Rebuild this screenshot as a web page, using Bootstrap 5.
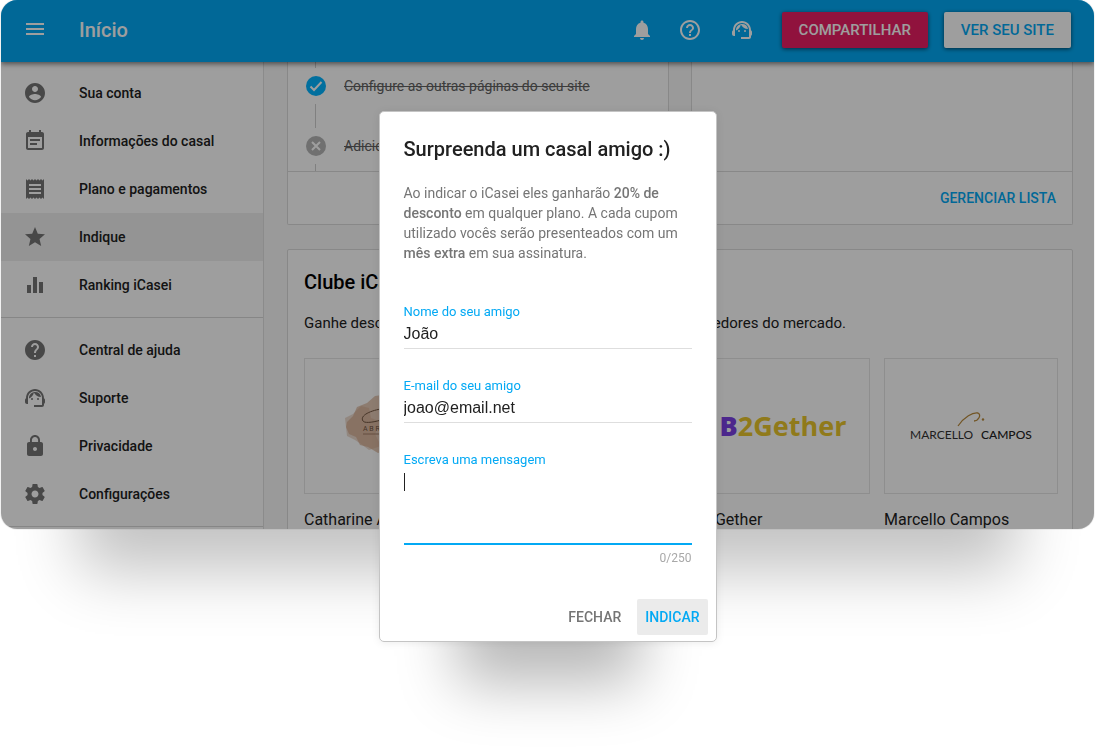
<!DOCTYPE html>
<html lang="pt-BR">
<head>
<meta charset="utf-8">
<meta name="viewport" content="width=device-width, initial-scale=1">
<title>Início - Indique</title>
<link href="https://cdn.jsdelivr.net/npm/bootstrap@5.3.0/dist/css/bootstrap.min.css" rel="stylesheet">
<style>
  body { font-family: Roboto, "Liberation Sans", sans-serif; font-size: 14px; color: #212121; background: #fff; }
  svg { display: block; fill: currentColor; }
  .app-shadow { margin: 0 1px; border-radius: 16px; box-shadow: 0 120px 60px -78px rgba(0,0,0,.24), 0 0 1px rgba(0,0,0,.5); }
  .app-window { border-radius: 16px; overflow: hidden; position: relative; background: #f8f8f8; }
  .dimmer { position: absolute; inset: 0; background: rgba(0,0,0,.38); z-index: 5; }
  .topbar { height: 62px; background: #03a9f4; color: #fff; padding: 0 23px 2px 22px; position: relative; z-index: 2; box-shadow: 0 2px 5px rgba(0,0,0,.5); }
  .page-title { font-size: 20px; font-weight: 500; line-height: 24px; margin-left: 32px; }
  .icon-btn { border: 0; background: none; color: inherit; padding: 0; }
  .top-btn { height: 36px; border: 0; border-radius: 2px; padding: 0 17px; font-size: 15px; font-weight: 500; line-height: 36px; box-shadow: 0 1px 4px rgba(0,0,0,.6); }
  .btn-share { background: #e91e63; color: #fff; }
  .btn-site { background: #fff; color: #03a9f4; }
  .side { width: 263px; background: #fff; border-right: 1px solid #e0e0e0; padding: 7px 0 2px; }
  .side a { display: flex; align-items: center; gap: 32px; height: 48px; padding: 0 22px; color: #212121; font-weight: 500; text-decoration: none; }
  .side a svg { color: #757575; }
  .side a.current { background: #efefef; }
  .side-rule { height: 1px; background: #d8d8d8; margin: 8px 0; }
  .side-rule:last-child { margin-bottom: 0; }
  .content-area { contain: size; overflow: hidden; padding: 0 21px 0 23px; }
  .panel { background: #fff; border: 1px solid #dcdcdc; border-radius: 2px; }
  .panel-top { border-top: 0; border-radius: 0 0 2px 2px; }
  .panel-row { display: grid; grid-template-columns: 1fr 1fr; gap: 22px; }
  .panel-foot { height: 53px; border-top: 1px solid #dcdcdc; padding: 0 16px; }
  .panel-foot a { color: #03a9f4; font-weight: 500; text-decoration: none; }
  .steps { height: 109px; overflow: hidden; padding: 0 16px; margin: 0; list-style: none; color: #616161; }
  .steps li { display: flex; align-items: center; gap: 16px; height: 36px; }
  .steps .step { height: 24px; text-decoration: line-through; }
  .steps .link-line::before { content: ""; width: 1px; height: 24px; background: #cfcfcf; margin-left: 11px; }
  .steps .link-line:first-child { height: 12px; }
  .steps .link-line:first-child::before { height: 12px; margin-top: -12px; }
  .club { padding: 16px 14px 0 16px; margin-top: 24px; }
  .club h2 { font-size: 20px; line-height: 32px; font-weight: 500; margin: 0; color: #000; }
  .club p { font-size: 15px; line-height: 20px; margin: 15px 0 25px; }
  .brands { display: grid; grid-template-columns: 174px 1fr 174px 174px; gap: 14px; }
  .brand-logo { height: 136px; border: 1px solid #e6e6e6; }
  .brand-name { font-size: 16px; line-height: 24px; margin: 14px 0 24px; white-space: nowrap; }
  .logo-b2 { font: 700 27px/40px "Open Sans", sans-serif; color: #e8c62c; }
  .logo-b2 b { color: #7b3fe4; }
  .modal-dialog { max-width: 338px; margin: 111px auto 0; }
  .modal-content { border: 1px solid #c4c4c4; border-radius: 5px; padding: 24px 24px 0; color: #212121; background: #fff; box-shadow: 0 120px 60px -78px rgba(0,0,0,.28), 0 1px 8px rgba(0,0,0,.08); }
  .modal h1 { font-size: 20px; line-height: 26px; font-weight: 500; margin: 0 0 21px; }
  .intro { line-height: 20px; color: #757575; margin: 0 0 39px; }
  .intro strong { font-weight: 500; }
  .field { margin-bottom: 27px; position: relative; }
  .field.message { margin-bottom: 0; }
  .field label { display: block; font-size: 13px; line-height: 20px; color: #03a9f4; }
  .field input, .field textarea { display: block; width: 100%; border: 0; border-bottom: 1px solid #dedede; border-radius: 0; padding: 0 0 3px; outline: 0; background: none; resize: none; font: 16px/24px "Liberation Sans", Arial, sans-serif; color: #212121; height: 27px; }
  .field textarea { height: 75px; border-bottom: 2px solid #03a9f4; }
  .text-caret { position: absolute; left: 0; top: 23px; width: 1px; height: 18px; background: #212121; }
  .counter { font-size: 12px; line-height: 16px; color: #a8a8a8; margin-top: 5px; text-align: right; }
  .actions { margin: 33px -16px 6px; gap: 8px; }
  .actions button { border: 0; border-radius: 2px; height: 36px; padding: 0 8px; font-weight: 500; background: none; color: #757575; }
  .actions .go { background: #ebebeb; color: #03a9f4; }
</style>
</head>
<body class="min-vh-100">
<svg class="d-none">
  <symbol id="support" viewBox="0 0 24 24"><path d="M21 12.220C21 6.730 16.740 3 12 3c-4.690 0-9 3.650-9 9.280-.600.340-1 .980-1 1.720v2c0 1.100.900 2 2 2h1v-6.100c0-3.870 3.130-7 7-7s7 3.130 7 7V19h-8v2h8c1.100 0 2-.900 2-2v-1.220c.590-.310 1-.920 1-1.640v-2.300c0-.700-.410-1.310-1-1.620z"/><circle cx="9" cy="13" r="1"/><circle cx="15" cy="13" r="1"/><path d="M18 11.030A6.040 6.040 0 0 0 12.050 6c-3.030 0-6.290 2.510-6.030 6.450a8.070 8.070 0 0 0 4.860-5.890c1.310 2.630 4 4.440 7.120 4.470z"/></symbol>
</svg>
<div class="app-shadow">
<div class="app-window">
  <header class="topbar d-flex align-items-center">
    <button class="icon-btn" aria-label="Menu"><svg width="24" height="24" viewBox="0 0 24 24"><path d="M3 17h18v-2H3v2zm0-5h18v-2H3v2zm0-7v2h18V5H3z"/></svg></button>
    <div class="page-title">Início</div>
    <div class="d-flex align-items-center ms-auto">
      <button class="icon-btn me-4" aria-label="Notificações"><svg width="24" height="24" viewBox="0 0 24 24"><path d="M12 22c1.100 0 2-.900 2-2h-4c0 1.100.900 2 2 2zm6-6v-5c0-3.070-1.630-5.640-4.500-6.320V4c0-.830-.670-1.500-1.500-1.500s-1.500.670-1.500 1.500v.680C7.640 5.360 6 7.920 6 11v5l-2 2v1h16v-1l-2-2z"/></svg></button>
      <button class="icon-btn me-4" aria-label="Ajuda"><svg width="24" height="24" viewBox="0 0 24 24"><path d="M11 18h2v-2h-2v2zm1-16C6.480 2 2 6.480 2 12s4.480 10 10 10 10-4.480 10-10S17.520 2 12 2zm0 18c-4.410 0-8-3.590-8-8s3.590-8 8-8 8 3.590 8 8-3.590 8-8 8zm0-14c-2.210 0-4 1.790-4 4h2c0-1.100.900-2 2-2s2 .900 2 2c0 2-3 1.750-3 5h2c0-2.250 3-2.500 3-5 0-2.210-1.790-4-4-4z"/></svg></button>
      <button class="icon-btn ms-1 me-4" aria-label="Suporte"><svg width="24" height="24"><use href="#support"/></svg></button>
      <button class="top-btn btn-share ms-1 me-3">COMPARTILHAR</button>
      <button class="top-btn btn-site">VER SEU SITE</button>
    </div>
  </header>
  <div class="d-flex">
    <nav class="side flex-shrink-0">
      <a href="#"><svg width="24" height="24" viewBox="0 0 24 24"><path d="M12 2C6.480 2 2 6.480 2 12s4.480 10 10 10 10-4.480 10-10S17.520 2 12 2zm0 3c1.660 0 3 1.340 3 3s-1.340 3-3 3-3-1.340-3-3 1.340-3 3-3zm0 14.200c-2.500 0-4.710-1.280-6-3.220.030-1.990 4-3.080 6-3.080 1.990 0 5.970 1.090 6 3.080-1.290 1.940-3.500 3.220-6 3.220z"/></svg>Sua conta</a>
      <a href="#"><svg width="24" height="24" viewBox="0 0 24 24"><path d="M17 10H7v2h10v-2zm2-7h-1V1h-2v2H8V1H6v2H5c-1.110 0-1.990.900-1.990 2L3 19c0 1.100.890 2 2 2h14c1.100 0 2-.900 2-2V5c0-1.100-.900-2-2-2zm0 16H5V8h14v11zm-5-5H7v2h7v-2z"/></svg>Informações do casal</a>
      <a href="#"><svg width="24" height="24" viewBox="0 0 24 24"><path d="M18 17H6v-2h12v2zm0-4H6v-2h12v2zm0-4H6V7h12v2zM3 22l1.500-1.500L6 22l1.500-1.500L9 22l1.500-1.500L12 22l1.500-1.500L15 22l1.500-1.500L18 22l1.500-1.500L21 22V2l-1.500 1.500L18 2l-1.500 1.500L15 2l-1.500 1.500L12 2l-1.500 1.500L9 2 7.500 3.500 6 2 4.500 3.500 3 2v20z"/></svg>Plano e pagamentos</a>
      <a href="#" class="current" aria-current="page"><svg width="24" height="24" viewBox="0 0 24 24"><path d="M12 17.270L18.180 21l-1.640-7.030L22 9.240l-7.190-.610L12 2 9.190 8.630 2 9.240l5.460 4.730L5.820 21z"/></svg>Indique</a>
      <a href="#"><svg width="24" height="24" viewBox="0 0 24 24"><path d="M4 12h4v8H4zM10 4h4v16h-4zM16 9h4v11h-4z"/></svg>Ranking iCasei</a>
      <div class="side-rule"></div>
      <a href="#"><svg width="24" height="24" viewBox="0 0 24 24"><path d="M12 2C6.480 2 2 6.480 2 12s4.480 10 10 10 10-4.480 10-10S17.520 2 12 2zm1 17h-2v-2h2v2zm2.070-7.750l-.900.920C13.450 12.900 13 13.500 13 15h-2v-.500c0-1.100.450-2.100 1.170-2.830l1.240-1.260c.370-.360.590-.860.590-1.410 0-1.100-.900-2-2-2s-2 .900-2 2H8c0-2.210 1.790-4 4-4s4 1.790 4 4c0 .880-.360 1.680-.930 2.250z"/></svg>Central de ajuda</a>
      <a href="#"><svg width="24" height="24"><use href="#support"/></svg>Suporte</a>
      <a href="#"><svg width="24" height="24" viewBox="0 0 24 24"><path d="M18 8h-1V6c0-2.760-2.240-5-5-5S7 3.240 7 6v2H6c-1.100 0-2 .900-2 2v10c0 1.100.900 2 2 2h12c1.100 0 2-.900 2-2V10c0-1.100-.900-2-2-2zm-6 9c-1.100 0-2-.900-2-2s.900-2 2-2 2 .900 2 2-.900 2-2 2zm3.100-9H8.900V6c0-1.710 1.390-3.100 3.100-3.100s3.100 1.390 3.100 3.100v2z"/></svg>Privacidade</a>
      <a href="#"><svg width="24" height="24" viewBox="0 0 24 24"><path d="M19.430 12.980c.040-.320.070-.640.070-.980s-.030-.660-.070-.980l2.110-1.650c.190-.150.240-.420.120-.640l-2-3.460c-.120-.220-.390-.300-.610-.220l-2.490 1c-.520-.400-1.080-.730-1.690-.980l-.380-2.650A.488.488 0 0 0 14 2h-4c-.250 0-.460.180-.490.420l-.380 2.650c-.610.250-1.170.590-1.690.980l-2.490-1c-.230-.090-.490 0-.610.220l-2 3.460c-.130.220-.070.490.120.640l2.110 1.650c-.040.320-.070.650-.070.980s.030.660.070.980l-2.110 1.650c-.190.150-.240.420-.120.640l2 3.460c.120.220.390.300.610.220l2.490-1c.520.400 1.080.730 1.690.980l.380 2.650c.030.240.240.420.490.420h4c.250 0 .460-.180.490-.420l.380-2.650c.610-.250 1.170-.590 1.690-.980l2.490 1c.230.090.490 0 .610-.220l2-3.460c.120-.220.070-.490-.120-.640l-2.110-1.650zM12 15.500c-1.930 0-3.500-1.570-3.500-3.500s1.570-3.500 3.500-3.500 3.500 1.570 3.500 3.500-1.570 3.500-3.500 3.500z"/></svg>Configurações</a>
      <div class="side-rule"></div>
    </nav>
    <main class="content-area flex-grow-1">
      <div class="panel-row">
        <section class="panel panel-top">
          <ul class="steps">
            <li class="link-line"></li>
            <li class="step"><svg width="24" height="24" viewBox="0 0 24 24"><circle cx="12" cy="12" r="10" fill="#03b4ff"/><path d="M6.500 12.500l3.500 3.500 7.500-8" fill="none" stroke="#fff" stroke-width="2"/></svg>Configure as outras páginas do seu site</li>
            <li class="link-line"></li>
            <li class="step"><svg width="24" height="24" viewBox="0 0 24 24"><circle cx="12" cy="12" r="10" fill="#b5b5b5"/><path d="M8 8l8 8M16 8l-8 8" fill="none" stroke="#fff" stroke-width="2"/></svg>Adicione</li>
            <li class="link-line"></li>
          </ul>
          <div class="panel-foot"></div>
        </section>
        <section class="panel panel-top">
          <div class="steps"></div>
          <div class="panel-foot d-flex align-items-center justify-content-end"><a href="#">GERENCIAR LISTA</a></div>
        </section>
      </div>
      <section class="panel club">
        <h2>Clube iCasei</h2>
        <p>Ganhe descontos e vantagens especiais dos melhores fornecedores do mercado.</p>
        <div class="brands">
          <div>
            <div class="brand-logo d-flex align-items-center justify-content-center">
              <svg width="96" height="68" viewBox="0 0 96 68"><path d="M4 30l6-6 4-9 10-4 8-7 14-2 12 3 14-2 10 8 8 10 3 12-6 12-12 8-14 4-16 1-10 3-10-6-8-2-4-8-7-3-3-7z" fill="#d9b195" opacity=".7"/><path d="M2 26l8-4 8-8 8 2 2 10 10 4-6 12 6 12-12 4-8-6-6-4-8-4z" fill="#cfa384" opacity=".4"/><path d="M20 29c-4-6 10-12 26-13 12 0 4 10-8 12-10 3-17 3-18 1z" fill="none" stroke="#70543f"/><path d="M20 42h52" stroke="#a07d66"/><text x="20" y="39" font-size="7" fill="#70543f">A B R A N T E S</text></svg>
            </div>
            <div class="brand-name">Catharine Abrantes</div>
          </div>
          <div>
            <div class="brand-logo"></div>
          </div>
          <div>
            <div class="brand-logo d-flex align-items-center justify-content-center"><span class="logo-b2"><b>B</b>2Gether</span></div>
            <div class="brand-name">B2Gether</div>
          </div>
          <div>
            <div class="brand-logo d-flex align-items-center justify-content-center">
              <svg width="124" height="30" viewBox="0 0 124 30"><path d="M49 15C55 6 64 1 69 2c4 2 0 8-4 8" fill="none" stroke="#b98a3c" stroke-width="1.300"/><circle cx="74" cy="8.500" r="1.200" fill="#b98a3c"/><g font-family="Lato" font-size="12" fill="#333"><text x="1" y="28">MARCELLO</text><text x="72" y="28" font-weight="500" fill="#222">CAMPOS</text></g></svg>
            </div>
            <div class="brand-name">Marcello Campos</div>
          </div>
        </div>
      </section>
    </main>
  </div>
  <div class="dimmer"></div>
</div>
</div>

<div class="modal d-block" tabindex="-1" role="dialog" aria-labelledby="dialog-title">
  <div class="modal-dialog">
    <form class="modal-content">
      <h1 id="dialog-title">Surpreenda um casal amigo :)</h1>
      <p class="intro">Ao indicar o iCasei eles ganharão <strong>20% de desconto</strong> em qualquer plano. A cada cupom utilizado vocês serão presenteados com um <strong>mês extra</strong> em sua assinatura.</p>
      <div class="field"><label for="friend-name">Nome do seu amigo</label><input type="text" id="friend-name" value="João"></div>
      <div class="field"><label for="friend-mail">E-mail do seu amigo</label><input type="email" id="friend-mail" value="joao@email.net"></div>
      <div class="field message"><label for="friend-message">Escreva uma mensagem</label><textarea id="friend-message" maxlength="250"></textarea><span class="text-caret"></span></div>
      <div class="counter">0/250</div>
      <div class="actions d-flex justify-content-end">
        <button type="button">FECHAR</button>
        <button type="submit" class="go">INDICAR</button>
      </div>
    </form>
  </div>
</div>
<script src="https://cdn.jsdelivr.net/npm/bootstrap@5.3.0/dist/js/bootstrap.bundle.min.js"></script>
</body>
</html>
